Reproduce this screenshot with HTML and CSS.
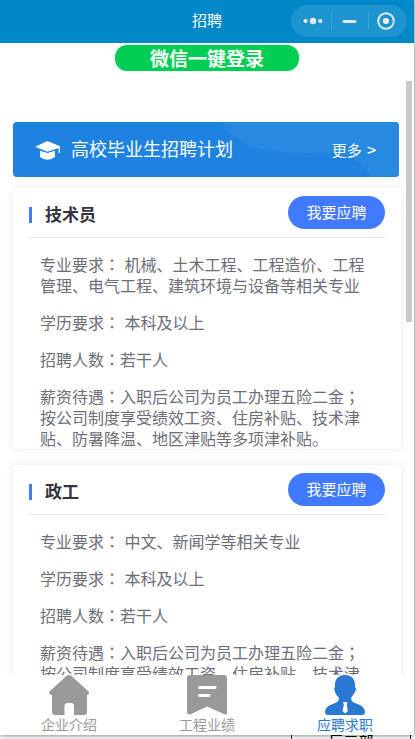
FILE: index.html
```html
<!DOCTYPE html>
<html lang="zh-CN">
<head>
<meta charset="utf-8">
<title>招聘</title>
<link rel="stylesheet" href="styles.css">
</head>
<body>
<div class="app">
  <header class="navbar">
    <h1>招聘</h1>
    <div class="capsule">
      <svg width="116" height="32" viewBox="0 0 116 32">
        <g fill="#e7e9ec"><circle cx="14.5" cy="16" r="2.1"/><circle cx="22" cy="16" r="3.2"/><circle cx="29.3" cy="16" r="2.1"/><rect x="51.5" y="15" width="14" height="3" rx="1.5"/><circle cx="95" cy="16" r="3.1"/></g>
        <path d="M40.5 7v18M77.5 7v18" stroke="#3da3d5"/>
        <circle cx="95" cy="16" r="7.8" fill="none" stroke="#e7e9ec" stroke-width="1.9"/>
      </svg>
    </div>
  </header>
  <main class="content">
    <button class="login">微信一键登录</button>
    <section class="banner">
      <svg class="waves" width="386" height="55" viewBox="0 0 386 55"><path d="M209 0Q220 21 252 28Q283 33 325 31Q346 36 358 55H386V0Z" fill="#2789df"/></svg>
      <svg class="cap" width="26" height="20" viewBox="0 0 26 20" fill="#fff"><path d="M0 5.8 12.5 0 25 5.2V12h-1.4V7L12.5 10.7Z"/><path d="M5 9.7 12.5 12 20 9.7V16Q12.5 21.5 5 16Z"/></svg>
      <h2>高校毕业生招聘计划</h2>
      <a class="more">更多<b>&gt;</b></a>
    </section>
    <section class="card">
      <div class="card-head"><i></i><h3>技术员</h3><button>我要应聘</button></div>
      <div class="details">
        <p>专业要求<span class="mid" lang="zh-TW">：</span> 机械、土木工程、工程造价、工程<br>管理、电气工程、建筑环境与设备等相关专业</p>
        <p>学历要求<span class="mid" lang="zh-TW">：</span> 本科及以上</p>
        <p>招聘人数<span class="mid" lang="zh-TW">：</span>若干人</p>
        <p>薪资待遇<span class="mid" lang="zh-TW">：</span>入职后公司为员工办理五险二金<span class="mid" lang="zh-TW">；</span><br>按公司制度享受绩效工资、住房补贴、技术津<br>贴、防暑降温、地区津贴等多项津补贴。</p>
      </div>
    </section>
    <section class="card">
      <div class="card-head"><i></i><h3>政工</h3><button>我要应聘</button></div>
      <div class="details">
        <p>专业要求<span class="mid" lang="zh-TW">：</span> 中文、新闻学等相关专业</p>
        <p>学历要求<span class="mid" lang="zh-TW">：</span> 本科及以上</p>
        <p>招聘人数<span class="mid" lang="zh-TW">：</span>若干人</p>
        <p>薪资待遇<span class="mid" lang="zh-TW">：</span>入职后公司为员工办理五险二金<span class="mid" lang="zh-TW">；</span><br>按公司制度享受绩效工资、住房补贴、技术津</p>
      </div>
    </section>
    <div class="scrollbar"></div>
  </main>
  <nav class="tabs">
    <a><svg width="40" height="40" viewBox="0 0 40 40"><path d="M17.4 1Q20 -1 22.6 1L39.5 16.5Q41 19.5 38 20V37Q38 40 35 40H25V31Q25 28 22 28H18.500Q15.500 28 15.500 31V40H6Q3 40 3 37V20Q-1 19.500 .5 16.500Z" fill="#999"/></svg><span>企业介绍</span></a>
    <a><svg width="40" height="40" viewBox="0 0 40 40"><path d="M3 0H37Q40 0 40 3V38Q40 41 37 39L20 31.500 3 39.500Q0 40 0 37V3Q0 0 3 0Z" fill="#999"/><path d="M12.500 12.500H28M12.500 20.500H22" stroke="#fff" stroke-width="3" stroke-linecap="round"/></svg><span>工程业绩</span></a>
    <a class="active"><svg width="40" height="40" viewBox="0 0 40 40"><path d="M20 0C28 0 30.500 6 30 12Q32 13 30 17Q28 20 26 23Q26 27 31 28.500Q40 31 40 37Q40 40 37 40H3Q0 40 0 37Q0 31 9 28.500Q14 27 14 23Q11 20 10 17Q8.500 13 10 12C9.500 6 12 0 20 0Z" fill="#2878d4"/><path d="M18 27H22.500L21.800 30 22.800 36 20.200 38.500 17.500 36 18.800 30Z" fill="#fff"/></svg><span>应聘求职</span></a>
  </nav>
</div>
<div class="behind"><div class="cell">巨三部</div></div>
</body>
</html>
```
FILE: styles.css
```css
* { box-sizing: border-box; margin: 0; padding: 0; }
body {
  position: relative;
  width: 415px;
  height: 739px;
  overflow: hidden;
  background: #fff;
  font-family: "Noto Sans CJK SC", sans-serif;
}
button { border: 0; font-family: inherit; }
.app {
  position: relative;
  z-index: 1;
  display: flex;
  flex-direction: column;
  width: 414px;
  height: 735px;
  background: #fff;
  box-shadow: 0 0 5px rgba(0, 0, 0, .65);
}
.navbar {
  position: relative;
  flex: none;
  height: 43px;
  background: #0088c9;
  color: #fff;
  text-align: center;
}
.navbar h1 { font-size: 15px; font-weight: 400; line-height: 40px; }
.capsule {
  position: absolute;
  top: 5px;
  right: 7px;
  width: 116px;
  height: 32px;
  border-radius: 16px;
  background: #1c94cf;
}
.capsule svg { display: block; }
.content {
  position: relative;
  flex: none;
  height: 632px;
  padding: 2px 13px 0;
  overflow: hidden;
}
.login {
  display: block;
  width: 184px;
  height: 26px;
  margin: 0 auto 51px 102px;
  border-radius: 12px;
  background: #00cf54;
  color: #fff;
  font-size: 19px;
  font-weight: 700;
  line-height: 26px;
}
.banner {
  position: relative;
  display: flex;
  align-items: center;
  width: 386px;
  height: 55px;
  padding: 0 23px 0 22px;
  border-radius: 4px;
  overflow: hidden;
  background: #1d82e0;
  color: #fff;
}
.waves { position: absolute; top: 0; left: 0; }
.cap { position: relative; top: 1px; }
.banner h2 { position: relative; margin: 0 0 3px 10px; font-size: 18px; font-weight: 400; }
.more { position: relative; display: flex; align-items: center; gap: 5px; margin: 0 0 1px auto; font-size: 15px; }
.more b { font-size: 16px; font-weight: 500; }
.card {
  width: 388px;
  height: 261px;
  margin-top: 11px;
  padding: 0 16px;
  border-radius: 4px;
  background: #fff;
  box-shadow: 0 0 8px rgba(0, 0, 0, .09);
}
.card + .card { margin-top: 16px; }
.card-head {
  display: flex;
  align-items: center;
  height: 50px;
  border-bottom: 1px solid #e8e8ea;
}
.card-head i { width: 3px; height: 16px; margin-top: 4px; background: #417aff; }
.card-head h3 { margin: 3px 0 0 13px; color: #34343e; font-size: 17px; font-weight: 700; line-height: 24px; }
.card-head button {
  width: 97px;
  height: 33px;
  margin-left: auto;
  padding-bottom: 2px;
  border-radius: 17px;
  background: #417aff;
  color: #fff;
  font-size: 15px;
}
.details { padding: 16px 0 0 11px; color: #6d6d78; font-size: 16px; line-height: 21px; word-spacing: 1px; white-space: nowrap; }
.details p { margin-bottom: 16px; }
.mid { font-family: "Noto Sans CJK TC", sans-serif; }
.scrollbar {
  position: absolute;
  top: 38px;
  right: 2px;
  width: 6px;
  height: 241px;
  background: #c9c9c9;
}
.tabs { display: flex; height: 60px; background: #fff; color: #999; }
.tabs a { flex: 1; display: flex; flex-direction: column; align-items: center; }
.tabs svg { display: block; flex: none; }
.tabs span { font-size: 14px; line-height: 18px; }
.tabs .active { color: #2878d4; }
.behind { display: flex; height: 4px; margin-left: 291px; width: 120px; overflow: hidden; }
.cell {
  flex: 1;
  border: solid #222;
  border-width: 0 1px;
  color: #000;
  font-size: 15px;
  line-height: 12px;
  text-align: center;
}
```
